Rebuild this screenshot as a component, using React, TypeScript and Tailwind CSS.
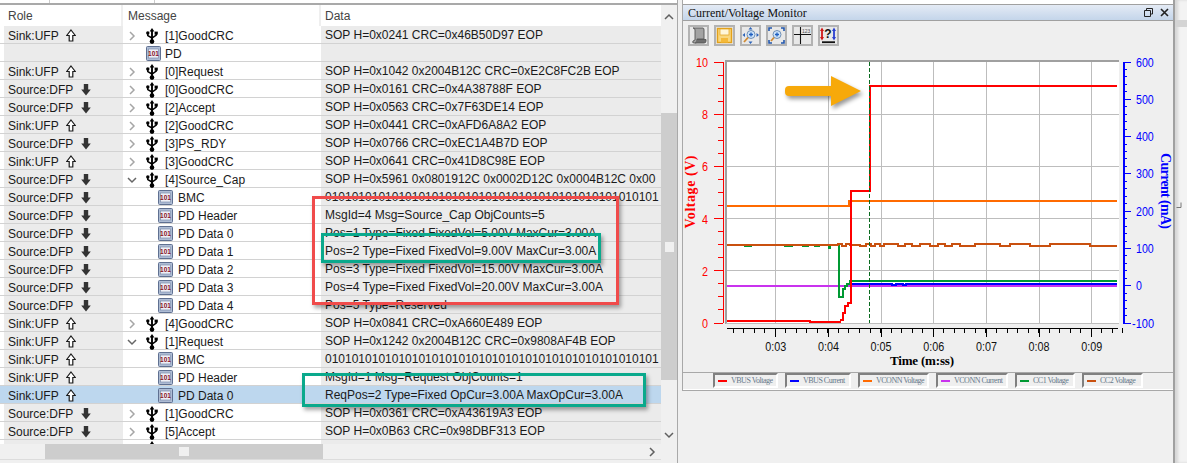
import type { ReactNode } from 'react'

const SANS = 'font-["Liberation_Sans",Arial,sans-serif]'

type Dir = 'up' | 'down' | null
type Row = {
  role: string
  dir: Dir
  node: 'closed' | 'open' | 'leaf' | 'child' | 'none'
  msg: string
  data: string
  selected?: boolean
}

const BITS = '01010101010101010101010101010101010101010101010101'

const rows: Row[] = [
  { role: 'Sink:UFP', dir: 'up', node: 'closed', msg: '[1]GoodCRC', data: 'SOP H=0x0241 CRC=0x46B50D97 EOP' },
  { role: '', dir: null, node: 'leaf', msg: 'PD', data: '' },
  { role: 'Sink:UFP', dir: 'up', node: 'closed', msg: '[0]Request', data: 'SOP H=0x1042 0x2004B12C CRC=0xE2C8FC2B EOP' },
  { role: 'Source:DFP', dir: 'down', node: 'closed', msg: '[0]GoodCRC', data: 'SOP H=0x0161 CRC=0x4A38788F EOP' },
  { role: 'Source:DFP', dir: 'down', node: 'closed', msg: '[2]Accept', data: 'SOP H=0x0563 CRC=0x7F63DE14 EOP' },
  { role: 'Sink:UFP', dir: 'up', node: 'closed', msg: '[2]GoodCRC', data: 'SOP H=0x0441 CRC=0xAFD6A8A2 EOP' },
  { role: 'Source:DFP', dir: 'down', node: 'closed', msg: '[3]PS_RDY', data: 'SOP H=0x0766 CRC=0xEC1A4B7D EOP' },
  { role: 'Sink:UFP', dir: 'up', node: 'closed', msg: '[3]GoodCRC', data: 'SOP H=0x0641 CRC=0x41D8C98E EOP' },
  { role: 'Source:DFP', dir: 'down', node: 'open', msg: '[4]Source_Cap', data: 'SOP H=0x5961 0x0801912C 0x0002D12C 0x0004B12C 0x00' },
  { role: 'Source:DFP', dir: 'down', node: 'child', msg: 'BMC', data: BITS },
  { role: 'Source:DFP', dir: 'down', node: 'child', msg: 'PD Header', data: 'MsgId=4 Msg=Source_Cap ObjCounts=5' },
  { role: 'Source:DFP', dir: 'down', node: 'child', msg: 'PD Data 0', data: 'Pos=1 Type=Fixed FixedVol=5.00V MaxCur=3.00A' },
  { role: 'Source:DFP', dir: 'down', node: 'child', msg: 'PD Data 1', data: 'Pos=2 Type=Fixed FixedVol=9.00V MaxCur=3.00A' },
  { role: 'Source:DFP', dir: 'down', node: 'child', msg: 'PD Data 2', data: 'Pos=3 Type=Fixed FixedVol=15.00V MaxCur=3.00A' },
  { role: 'Source:DFP', dir: 'down', node: 'child', msg: 'PD Data 3', data: 'Pos=4 Type=Fixed FixedVol=20.00V MaxCur=3.00A' },
  { role: 'Source:DFP', dir: 'down', node: 'child', msg: 'PD Data 4', data: 'Pos=5 Type=Reserved' },
  { role: 'Sink:UFP', dir: 'up', node: 'closed', msg: '[4]GoodCRC', data: 'SOP H=0x0841 CRC=0xA660E489 EOP' },
  { role: 'Sink:UFP', dir: 'up', node: 'open', msg: '[1]Request', data: 'SOP H=0x1242 0x2004B12C CRC=0x9808AF4B EOP' },
  { role: 'Sink:UFP', dir: 'up', node: 'child', msg: 'BMC', data: BITS },
  { role: 'Sink:UFP', dir: 'up', node: 'child', msg: 'PD Header', data: 'MsgId=1 Msg=Request ObjCounts=1' },
  { role: 'Sink:UFP', dir: 'up', node: 'child', msg: 'PD Data 0', data: 'ReqPos=2 Type=Fixed OpCur=3.00A MaxOpCur=3.00A', selected: true },
  { role: 'Source:DFP', dir: 'down', node: 'closed', msg: '[1]GoodCRC', data: 'SOP H=0x0361 CRC=0xA43619A3 EOP' },
  { role: 'Source:DFP', dir: 'down', node: 'closed', msg: '[5]Accept', data: 'SOP H=0x0B63 CRC=0x98DBF313 EOP' },
]

function RoleArrow({ dir }: { dir: Dir }) {
  if (dir === 'up')
    return (
      <svg width="10" height="13" viewBox="0 0 10 13" className="ml-[7px] shrink-0">
        <path d="M5 1 L9.3 6.5 H6.8 V12 H3.2 V6.5 H0.7 Z" fill="#fff" stroke="#1a1a1a" strokeWidth="1.2" />
      </svg>
    )
  if (dir === 'down')
    return (
      <svg width="10" height="13" viewBox="0 0 10 13" className="ml-[8px] shrink-0">
        <path d="M2.8 1 H7.2 V6.5 H9.8 L5 12.5 L0.2 6.5 H2.8 Z" fill="#333" />
      </svg>
    )
  return null
}

function Chevron({ open }: { open: boolean }) {
  return (
    <svg width="10" height="10" viewBox="0 0 10 10" className="shrink-0">
      {open ? (
        <path d="M1 3 L5 7 L9 3" fill="none" stroke="#666" strokeWidth="1.5" />
      ) : (
        <path d="M3 1 L7 5 L3 9" fill="none" stroke="#a6a6a6" strokeWidth="1.5" />
      )}
    </svg>
  )
}

function UsbIcon() {
  return (
    <svg width="12" height="16" viewBox="0 0 12 16" className="shrink-0">
      <path d="M6 0 L8.4 3.6 H3.6 Z" fill="#000" />
      <path d="M6 3 V13" stroke="#000" strokeWidth="1.9" />
      <path d="M1.8 5.5 V7.6 L6 10 L10.2 7 V5.8" fill="none" stroke="#000" strokeWidth="1.5" />
      <circle cx="1.8" cy="5" r="1.7" fill="#000" />
      <rect x="8.6" y="3.6" width="3.2" height="3" fill="#000" />
      <circle cx="6" cy="13.6" r="2.3" fill="#000" />
    </svg>
  )
}

function BinIcon() {
  return (
    <svg width="15" height="15" viewBox="0 0 15 15" className="shrink-0">
      <rect x="0.5" y="0.5" width="14" height="14" rx="1" fill="#aebcd4" stroke="#5f7091" />
      <rect x="2.5" y="3" width="10" height="9" fill="#eef0f6" stroke="#7d8dab" strokeWidth="0.7" />
      <text x="7.5" y="9.7" textAnchor="middle" fontSize="6.5" fontWeight="700" fill="#8a1226" fontFamily="Liberation Sans">
        101
      </text>
    </svg>
  )
}

function TableRow({ row }: { row: Row }) {
  const sel = row.selected
  return (
    <div
      className={`flex h-[18px] shrink-0 border-b border-[#d2d2d2] text-[12px] text-[#1a1a1a] ${sel ? 'bg-[#bdd7ee]' : ''}`}
    >
      <div className={`w-[123px] shrink-0 ${sel ? '' : 'pl-[4px]'}`}>
        <div className={`flex h-full items-center pr-1 pt-[2px] ${sel ? 'pl-[8px]' : 'bg-[#ebebeb] pl-[4px]'}`}>
          <span>{row.role}</span>
          <RoleArrow dir={row.dir} />
        </div>
      </div>
      <div className="flex w-[198px] shrink-0 items-center pt-[2px]">
        {(row.node === 'closed' || row.node === 'open') && (
          <div className="flex items-center pl-[4px]">
            <Chevron open={row.node === 'open'} />
            <div className="ml-[9px]"><UsbIcon /></div>
            <span className="ml-[7px]">{row.msg}</span>
          </div>
        )}
        {row.node === 'leaf' && (
          <div className="flex items-center pl-[23px]">
            <BinIcon />
            <span className="ml-[4px]">{row.msg}</span>
          </div>
        )}
        {row.node === 'child' && (
          <div className="flex items-center pl-[35px]">
            <BinIcon />
            <span className="ml-[5px]">{row.msg}</span>
          </div>
        )}
      </div>
      <div className={`w-[340px] shrink-0 overflow-hidden whitespace-nowrap pl-[4px] pt-[2px] leading-[15px] ${sel ? '' : 'bg-[#ebebeb]'}`}>
        {row.data}
      </div>
    </div>
  )
}

function MessageTable() {
  return (
    <div className="relative flex h-[463px] w-[678px] shrink-0 flex-col border-r border-[#a9a9a9] bg-[#f0f0f0]">
      <div className="flex h-[5px] shrink-0 border-b-2 border-[#a9a9a9] bg-white">
        <div className="w-[50px] border-r border-[#cccccc]" />
        <div className="w-[105px] border-r border-[#cccccc]" />
      </div>
      <div className="flex min-h-0 flex-1">
        <div className="flex w-[661px] shrink-0 flex-col">
          <div className="flex h-[21px] shrink-0 bg-white text-[12px] leading-[22px] text-[#444]">
            <div className="w-[123px] border-r-2 border-[#efefef] pl-[8px]">Role</div>
            <div className="w-[198px] border-r-2 border-[#efefef] pl-[5px]">Message</div>
            <div className="pl-[4px]">Data</div>
          </div>
          <div className="flex h-[418px] shrink-0 flex-col overflow-hidden bg-white">
            {rows.map((r, i) => (
              <TableRow key={i} row={r} />
            ))}
            {/* next row, only the top of its icons is visible */}
            <div className="flex h-[18px] shrink-0">
              <div className="w-[123px] shrink-0 pl-[4px]">
                <div className="flex h-full bg-[#ebebeb] pl-[69px] pt-[3px]">
                  <svg width="10" height="13" viewBox="0 0 10 13">
                    <path d="M2.8 1 H7.2 V6.5 H9.8 L5 12.5 L0.2 6.5 H2.8 Z" fill="#333" />
                  </svg>
                </div>
              </div>
              <div className="w-[198px] shrink-0 pl-[23px] pt-[1px]"><UsbIcon /></div>
              <div className="w-[340px] shrink-0 bg-[#ebebeb]" />
            </div>
          </div>
          <div className="flex h-[15px] shrink-0 items-center bg-[#f0f0f0]">
            <div className="ml-[45px] flex h-full w-[278px] items-center justify-center bg-[#cdcdcd]">
              <div className="h-[9px] w-[10px] bg-[#f0f0f0]" />
            </div>
            <svg width="10" height="10" viewBox="0 0 10 10" className="ml-[324px]">
              <path d="M3 1 L7 5 L3 9" fill="none" stroke="#606060" strokeWidth="1.5" />
            </svg>
          </div>
          <div className="h-px shrink-0 bg-[#dcdcdc]" />
        </div>
        <div className="flex w-[16px] shrink-0 flex-col items-center bg-[#f0f0f0]">
          <svg width="10" height="8" viewBox="0 0 10 8" className="mt-[8px]">
            <path d="M1 6 L5 2 L9 6" fill="none" stroke="#606060" strokeWidth="1.5" />
          </svg>
          <div className="mt-[92px] flex h-[267px] w-full items-center justify-center bg-[#cdcdcd]">
            <div className="h-[10px] w-[9px] bg-[#f0f0f0]" />
          </div>
          <svg width="10" height="8" viewBox="0 0 10 8" className="mt-[51px]">
            <path d="M1 2 L5 6 L9 2" fill="none" stroke="#606060" strokeWidth="1.5" />
          </svg>
        </div>
      </div>
      {/* annotation boxes on top of the table */}
      <div className="pointer-events-none absolute left-[312px] top-[196px] h-[109px] w-[307px] border-[3px] border-[#f04b4b] shadow-[2px_3px_4px_rgba(0,0,0,0.35)]" />
      <div className="pointer-events-none absolute left-[321px] top-[233px] h-[30px] w-[280px] border-[3px] border-[#0aa98c] shadow-[2px_3px_4px_rgba(0,0,0,0.35)]" />
      <div className="pointer-events-none absolute left-[302px] top-[373px] h-[34px] w-[344px] border-[3px] border-[#0aa98c] shadow-[2px_3px_4px_rgba(0,0,0,0.35)]" />
    </div>
  )
}

const ToolBtn = ({ children }: { children: ReactNode }) => (
  <div className="flex h-[21px] w-[21px] items-center justify-center border-2 border-[#b3b3b3] bg-[#e8e8e8]">
    <svg width="17" height="17" viewBox="1 1 17 17">{children}</svg>
  </div>
)

function Toolbar() {
  return (
    <div className="flex h-[25px] shrink-0 items-end gap-[5px] pl-[5px]">
      <ToolBtn>
        <path d="M4 2 H14 Q15 2 15 4 V13 H8 V16 Q8 17 6 17 H5 Q3 17 4 15 L6 14 V4 Q6 2 4 2 Z" fill="#a3a3a3" stroke="#555" strokeWidth="0.9" />
        <path d="M8 13.5 H17 V15 Q17 17 15 17 H6" fill="#6f6f6f" stroke="#555" strokeWidth="0.9" />
      </ToolBtn>
      <ToolBtn>
        <rect x="2.5" y="2.5" width="14" height="14" fill="#f9d77e" stroke="#e3a11a" strokeWidth="1.4" />
        <rect x="5" y="3" width="9" height="6" fill="#fff6d8" stroke="#e3a11a" strokeWidth="0.7" />
        <rect x="6" y="12" width="7" height="4.5" fill="#f4b93a" />
      </ToolBtn>
      <ToolBtn>
        <path d="M9.5 1 L7.5 3.5 H11.5 Z M9.5 18 L7.5 15.5 H11.5 Z M1.5 9 L4 7 V11 Z M18 9 L15.5 7 V11 Z" fill="#2a62b8" />
        <circle cx="10" cy="8.5" r="4" fill="#cfe4fa" stroke="#6f8fb5" />
        <path d="M8 8.5 H12 M10 6.5 V10.5" stroke="#1f5fc0" strokeWidth="1.3" />
        <path d="M7 11.5 L3 16" stroke="#d08a32" strokeWidth="1.8" />
      </ToolBtn>
      <ToolBtn>
        <path d="M2 5 V2 H5 M14 2 H17 V5 M2 14 V17 H5 M17 14 V17 H14" fill="none" stroke="#2257ad" strokeWidth="1.6" />
        <circle cx="10" cy="8.5" r="4" fill="#cfe4fa" stroke="#6f8fb5" />
        <path d="M8 8.5 H12 M10 6.5 V10.5" stroke="#1f5fc0" strokeWidth="1.3" />
        <path d="M7 11.5 L4 15" stroke="#d08a32" strokeWidth="1.8" />
      </ToolBtn>
      <ToolBtn>
        <path d="M7.5 1 V18 M1 8.5 H18" stroke="#111" strokeWidth="1.1" />
        <text x="9" y="6.5" fontSize="5" fill="#555" fontFamily="Liberation Sans">123</text>
      </ToolBtn>
      <ToolBtn>
        <path d="M3 3 V13" stroke="#d01818" strokeWidth="1.8" />
        <path d="M15 3 V13" stroke="#2a3fd0" strokeWidth="1.8" />
        <path d="M3 1.5 L1 5 H5 Z M3 14.5 L1 11 H5 Z" fill="#d01818" />
        <path d="M15 1.5 L13 5 H17 Z M15 14.5 L13 11 H17 Z" fill="#2a3fd0" />
        <path d="M3 16.2 H16" stroke="#111" strokeWidth="1.8" />
        <text x="9" y="11.5" textAnchor="middle" fontSize="12" fontWeight="700" fill="#111" fontFamily="Liberation Sans">?</text>
      </ToolBtn>
    </div>
  )
}

// chart geometry, in page pixels (the svg viewBox starts at the panel origin)
const GRID_X = [775.7, 828.4, 881, 933.7, 986.4, 1039, 1091.8]
const X_LABELS = ['0:03', '0:04', '0:05', '0:06', '0:07', '0:08', '0:09']
const GRID_Y = [114.2, 166.4, 218.6, 270.8]

const vbusV = 'M727 320.5 H810 V322 H840 L841 320 H843 V313 H845 V306 H848 V303 H850.5 V191 H870 V86 H1117'
const vconnV = 'M727 206 H849 V201 H1117'
const cc1 = 'M727 245 H745 V246 H751 V245 H785 V246 H792 V245 H803 V246 H808 V245 H815 V246 H819 V245 H829 V248 H830 V245 H838.5 V297 H843 V289 H845 V286 H847 V284 H850 V280.5 H1117'
const vbusI = 'M850 283.5 H892 V285 H896 V283.5 H903 V285 H906 V283.5 H1117'
const cc2 = 'M727 245 H838 V244 H842 V246 H846 V244 H850 V245 H860 V246 H866 V244 H871 V246 H875 V244 H880 V246 H884 V244 H898 V246 H905 V244 H912 V246 H920 V244 H930 V246 H938 V244 H945 V246 H952 V244 H960 V246 H975 V244 H1000 V246 H1010 V244 H1030 V246 H1050 V244 H1090 V246 H1117'

function Chart() {
  const xMinor: number[] = []
  for (let i = 0; i < 38; i++) xMinor.push(733 + i * 10.54)
  const leftMinor: number[] = []
  for (let i = 0; i <= 20; i++) leftMinor.push(62 + i * 13.05)
  const rightMinor: number[] = []
  for (let i = 0; i <= 35; i++) rightMinor.push(62 + i * 7.46)
  const leftLabels = [10, 8, 6, 4, 2, 0]
  const rightLabels = [600, 500, 400, 300, 200, 100, 0, -100]

  return (
    <svg viewBox="683 46 490 326" width="490" height="326" className="block shrink-0" shapeRendering="crispEdges">
      <rect x="726" y="62" width="393" height="261" fill="#ffffff" />
      {GRID_X.map(x => (
        <line key={x} x1={x} x2={x} y1={62} y2={323} stroke="#bdbdbd" />
      ))}
      {GRID_Y.map(y => (
        <line key={y} x1={726} x2={1119} y1={y} y2={y} stroke="#bdbdbd" />
      ))}
      <line x1={725} x2={1119} y1={61} y2={61} stroke="#a0a0a0" strokeWidth="2" />
      <line x1={726} x2={726} y1={61} y2={324} stroke="#a0a0a0" strokeWidth="2" />
      <line x1={726} x2={1119} y1={323.5} y2={323.5} stroke="#bdbdbd" />

      <path d={vconnV} fill="none" stroke="#ff6a00" strokeWidth="2" />
      <line x1={727} x2={1117} y1={286} y2={286} stroke="#c933ee" strokeWidth="2" />
      <path d={vbusI} fill="none" stroke="#0000ff" strokeWidth="2" />
      <path d={cc1} fill="none" stroke="#009933" strokeWidth="2" />
      <path d={cc2} fill="none" stroke="#c9500f" strokeWidth="2" />
      <path d={vbusV} fill="none" stroke="#ff0000" strokeWidth="2" />
      <line x1={869.5} x2={869.5} y1={62} y2={323} stroke="#0a6b1f" strokeDasharray="4 2" />

      {/* orange pointer */}
      <g className="drop-shadow-[2px_3px_2px_rgba(0,0,0,0.4)]" shapeRendering="auto">
        <rect x="785" y="86" width="50" height="10" rx="4" fill="#f7a90a" />
        <path d="M831 76 L861 91 L831 106 Z" fill="#f7a90a" />
      </g>

      {/* left axis */}
      <line x1={723} x2={723} y1={62} y2={323} stroke="#ff0000" />
      {leftMinor.map((y, i) => (
        <line key={y} x1={i % 4 === 0 ? 714 : 718} x2={723} y1={y} y2={y} stroke="#ff0000" />
      ))}
      <g shapeRendering="auto">
        {leftLabels.map((v, i) => (
          <text
            key={v}
            x={708}
            y={62 + i * 52.2 + 5}
            textAnchor="end"
            fontSize="13"
            fill="#ff0000"
            fontFamily="Liberation Sans"
            textLength={String(v).length * 6}
            lengthAdjust="spacingAndGlyphs"
          >
            {v}
          </text>
        ))}
        <text
          transform="translate(695 192) rotate(-90)"
          textAnchor="middle"
          fontSize="14"
          fontWeight="700"
          fill="#ff0000"
          fontFamily="Liberation Serif"
          textLength={73}
        >
          Voltage (V)
        </text>
      </g>

      {/* right axis */}
      <line x1={1123.5} x2={1123.5} y1={62} y2={323} stroke="#0000ff" strokeWidth="2" />
      {rightMinor.map((y, i) => (
        <line key={y} x1={1123} x2={i % 5 === 0 ? 1131 : 1127} y1={y} y2={y} stroke="#0000ff" />
      ))}
      <g shapeRendering="auto">
        {rightLabels.map((v, i) => (
          <text
            key={v}
            x={v < 0 ? 1132 : 1136}
            y={62 + i * 37.3 + 4.5}
            fontSize="12"
            fill="#0000ff"
            fontFamily="Liberation Sans"
            textLength={v < 0 ? 22 : String(v).length * 5.9}
            lengthAdjust="spacingAndGlyphs"
          >
            {v}
          </text>
        ))}
        <text
          transform="translate(1161 191) rotate(90)"
          textAnchor="middle"
          fontSize="14"
          fontWeight="700"
          fill="#0000ff"
          fontFamily="Liberation Serif"
          textLength={76}
        >
          Current (mA)
        </text>
      </g>

      {/* time axis */}
      <line x1={727} x2={1118} y1={328} y2={328} stroke="#000" />
      {xMinor.map(x => (
        <line key={x} x1={x} x2={x} y1={328} y2={333} stroke="#000" />
      ))}
      {GRID_X.map(x => (
        <line key={x} x1={x} x2={x} y1={328} y2={337} stroke="#000" />
      ))}
      <g shapeRendering="auto">
        {X_LABELS.map((t, i) => (
          <text
            key={t}
            x={GRID_X[i]}
            y={351}
            textAnchor="middle"
            fontSize="12"
            fill="#111"
            fontFamily="Liberation Sans"
            textLength={21}
            lengthAdjust="spacingAndGlyphs"
          >
            {t}
          </text>
        ))}
        <text
          x={922}
          y={365}
          textAnchor="middle"
          fontSize="13"
          fontWeight="700"
          fill="#000"
          fontFamily="Liberation Serif"
          textLength={64}
        >
          Time (m:ss)
        </text>
      </g>
    </svg>
  )
}

const legend = [
  { label: 'VBUS Voltage', color: 'bg-[#ff0000]', w: 'w-[65px]' },
  { label: 'VBUS Current', color: 'bg-[#0000ff]', w: 'w-[66px]' },
  { label: 'VCONN Voltage', color: 'bg-[#ff6a00]', w: 'w-[71px]' },
  { label: 'VCONN Current', color: 'bg-[#c933ee]', w: 'w-[72px]' },
  { label: 'CC1 Voltage', color: 'bg-[#009933]', w: 'w-[60px]' },
  { label: 'CC2 Voltage', color: 'bg-[#c9500f]', w: 'w-[61px]' },
]

function Legend() {
  return (
    <div className="flex h-[18px] shrink-0 items-start gap-[7px] border-t border-b border-[#a8a8a8] border-b-white pl-[30px]">
      {legend.map(l => (
        <div
          key={l.label}
          className={`flex h-[15px] shrink-0 items-center border-2 border-[#808080] border-b-white border-r-white pl-[3px] ${l.w}`}
        >
          <span className={`h-[2px] w-[9px] shrink-0 ${l.color}`} />
          <span className="ml-[4px] whitespace-nowrap font-['Liberation_Serif',serif] text-[8px] leading-none tracking-[-0.5px] text-[#66788a]">
            {l.label}
          </span>
        </div>
      ))}
    </div>
  )
}

function MonitorPanel() {
  return (
    <div className="ml-[4px] h-[463px] w-[493px] shrink-0 border-r-2 border-[#a0a0a0] bg-[#f0f0f0]">
      <div className="flex h-[391px] flex-col border-b border-l border-[#a8a8a8] bg-[#efefef]">
        <div className="h-[4px] shrink-0 bg-white" />
        <div className="flex h-[17px] shrink-0 items-center justify-between border-y border-[#a0a0a0] bg-gradient-to-b from-[#e4ebf5] to-[#c4d5ea] pl-[5px] pr-[4px]">
          <span className="font-['Liberation_Serif',serif] text-[12px] leading-none text-[#111]">Current/Voltage Monitor</span>
          <div className="flex items-center gap-[7px]">
            <svg width="9" height="9" viewBox="0 0 9 9">
              <path d="M2.5 2.5 V0.5 H8.5 V6 H6.5 M0.5 2.5 H6.5 V8.5 H0.5 Z" fill="none" stroke="#222" />
            </svg>
            <svg width="9" height="9" viewBox="0 0 9 9">
              <path d="M1 1 L8 8 M8 1 L1 8" stroke="#222" strokeWidth="1.6" />
            </svg>
          </div>
        </div>
        <Toolbar />
        <Chart />
        <Legend />
      </div>
    </div>
  )
}

export default function App() {
  return (
    <div className={`flex h-[463px] w-[1187px] overflow-hidden bg-[#f0f0f0] ${SANS}`}>
      <MessageTable />
      <MonitorPanel />
      <div className="relative flex-1 bg-[#f3f3f3] shadow-[inset_3px_0_3px_rgba(0,0,0,0.12)]">
        <div className="mt-[20px] h-[7px] bg-[#d4d4d4]" />
        <svg width="6" height="7" viewBox="0 0 6 7" className="absolute left-[1px] top-[202px]">
          <path d="M5 0.5 V5.5 H0.5" fill="none" stroke="#777" />
        </svg>
      </div>
    </div>
  )
}
